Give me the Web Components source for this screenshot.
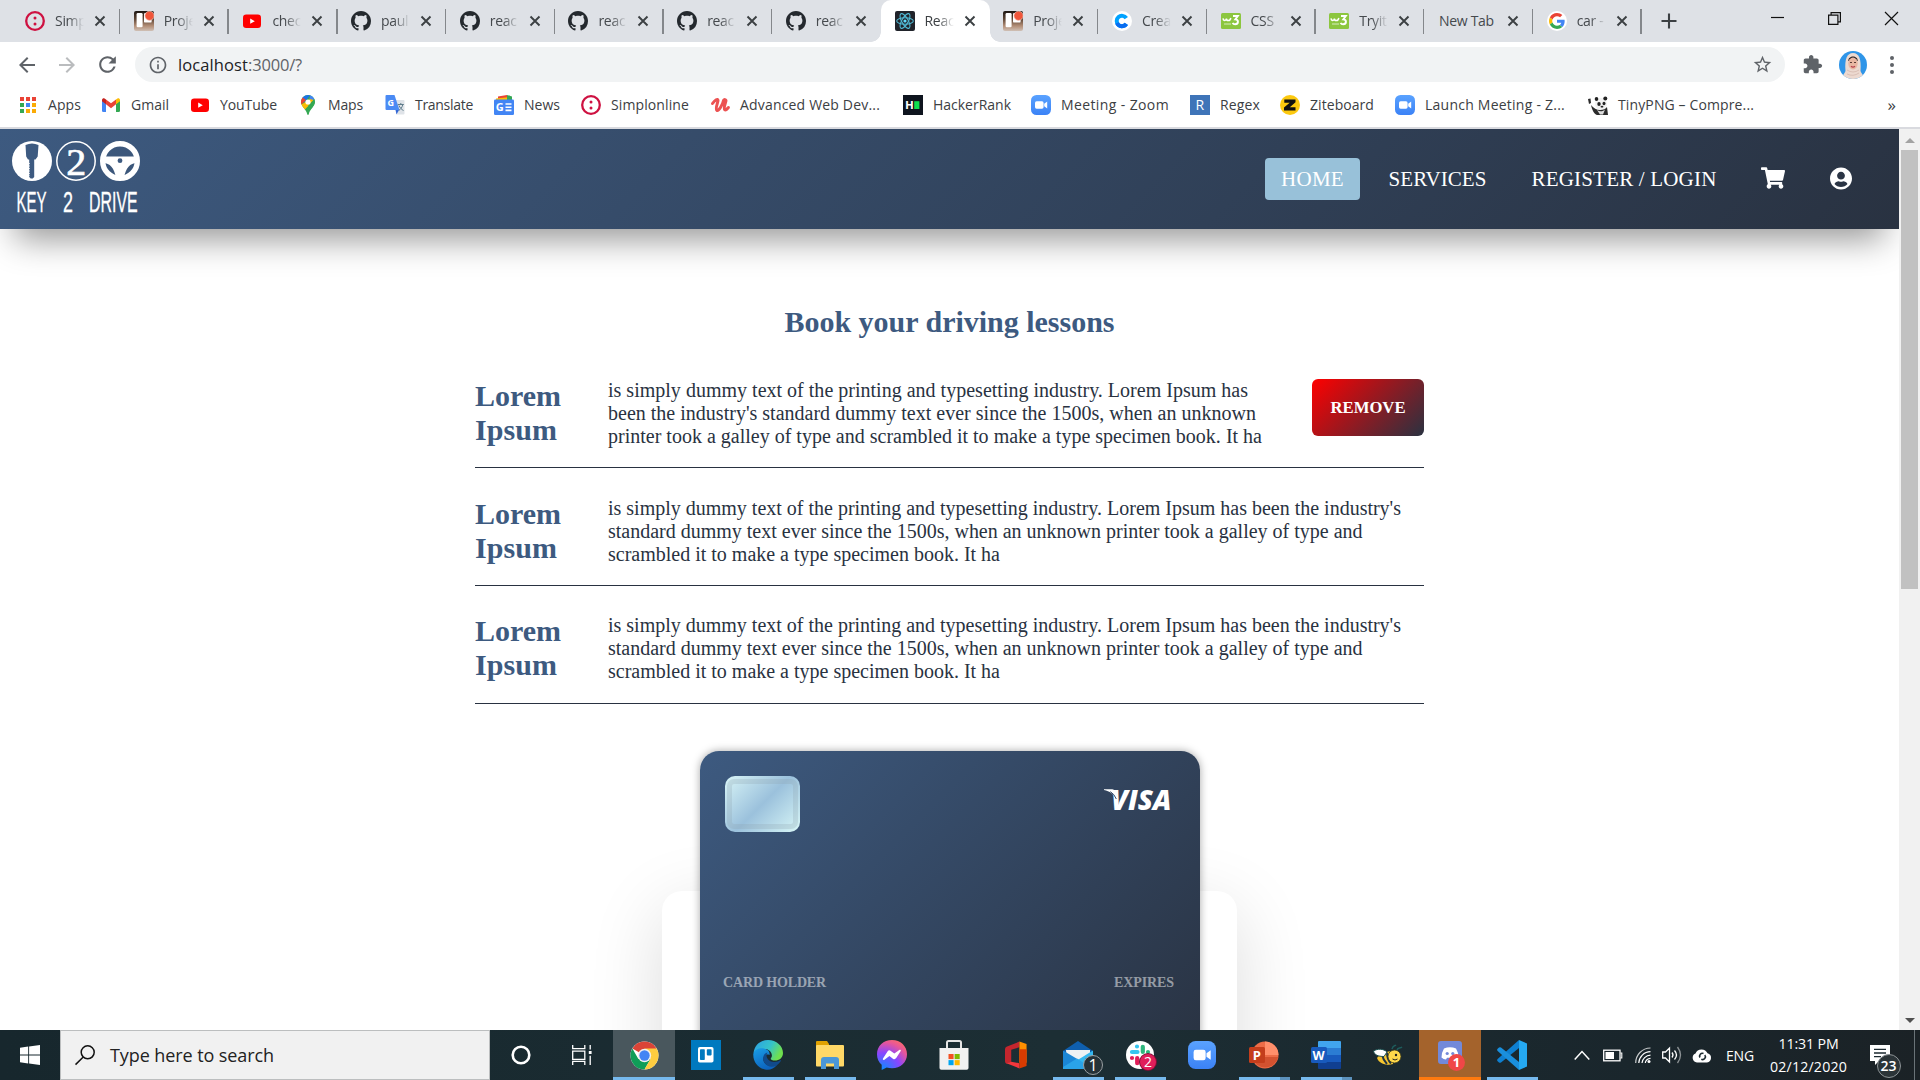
<!DOCTYPE html>
<html lang="en">
<head>
<meta charset="utf-8">
<title>React App</title>
<style>
html,body{margin:0;height:100%;overflow:hidden;background:#fff}
body{font-family:"Open Sans","Noto Sans",sans-serif}
</style>
</head>
<body>
<desktop-screen>
  <browser-tabs></browser-tabs>
  <address-bar></address-bar>
  <bookmark-bar></bookmark-bar>
  <page-view>
    <site-header></site-header>
    <lesson-list>
      <lesson-row>
        <fit-text w="640" slot="text">is simply dummy text of the printing and typesetting industry. Lorem Ipsum has</fit-text>
        <fit-text w="648" slot="text">been the industry's standard dummy text ever since the 1500s, when an unknown</fit-text>
        <fit-text w="654" slot="text">printer took a galley of type and scrambled it to make a type specimen book. It ha</fit-text>
        <remove-button slot="action">REMOVE</remove-button>
      </lesson-row>
      <lesson-row>
        <fit-text w="793" slot="text">is simply dummy text of the printing and typesetting industry. Lorem Ipsum has been the industry's</fit-text>
        <fit-text w="754.5" slot="text">standard dummy text ever since the 1500s, when an unknown printer took a galley of type and</fit-text>
        <fit-text w="392" slot="text">scrambled it to make a type specimen book. It ha</fit-text>
      </lesson-row>
      <lesson-row last>
        <fit-text w="793" slot="text">is simply dummy text of the printing and typesetting industry. Lorem Ipsum has been the industry's</fit-text>
        <fit-text w="754.5" slot="text">standard dummy text ever since the 1500s, when an unknown printer took a galley of type and</fit-text>
        <fit-text w="392" slot="text">scrambled it to make a type specimen book. It ha</fit-text>
      </lesson-row>
    </lesson-list>
    <payment-card></payment-card>
  </page-view>
  <task-bar></task-bar>
</desktop-screen>

<script>
const GH='<path fill="#24292e" d="M8 0C3.58 0 0 3.58 0 8c0 3.54 2.29 6.53 5.47 7.59.4.07.55-.17.55-.38 0-.19-.01-.82-.01-1.49-2.01.37-2.53-.49-2.69-.94-.09-.23-.48-.94-.82-1.13-.28-.15-.68-.52-.01-.53.63-.01 1.08.58 1.23.82.72 1.21 1.87.87 2.33.66.07-.52.28-.87.51-1.07-1.78-.2-3.64-.89-3.64-3.95 0-.87.31-1.59.82-2.15-.08-.2-.36-1.02.08-2.12 0 0 .67-.21 2.2.82.64-.18 1.32-.27 2-.27s1.36.09 2 .27c1.53-1.04 2.2-.82 2.2-.82.44 1.1.16 1.92.08 2.12.51.56.82 1.27.82 2.15 0 3.07-1.87 3.75-3.65 3.95.29.25.54.73.54 1.48 0 1.07-.01 1.93-.01 2.2 0 .21.15.46.55.38A8.01 8.01 0 0016 8c0-4.42-3.58-8-8-8z"/>';
const ZOOM='<defs><linearGradient id="z" x2="0" y2="1"><stop stop-color="#5aa2ff"/><stop offset="1" stop-color="#3b82f6"/></linearGradient></defs><rect width="20" height="20" rx="5.5" fill="url(#z)"/><rect x="4" y="6.3" width="8.6" height="7.4" rx="1.6" fill="#fff"/><path d="M13.2 8.8L16.2 6.6v6.8l-3-2.2z" fill="#fff"/>';
/* each entry: [viewBox, markup] */
const ICONS={
 simplon:['0 0 20 20','<circle cx="10" cy="10" r="8.8" fill="none" stroke="#ce1141" stroke-width="2.3"/><circle cx="10" cy="7" r="1.5" fill="#ce1141"/><circle cx="10" cy="13" r="1.5" fill="#ce1141"/>'],
 project:['0 0 20 20','<defs><linearGradient id="g" x2="0" y2="1"><stop stop-color="#1c1613"/><stop offset=".4" stop-color="#5e4636"/><stop offset=".75" stop-color="#b48f78"/><stop offset="1" stop-color="#cfc0b6"/></linearGradient></defs><rect width="20" height="20" rx="2" fill="url(#g)"/><rect x="2.6" y="2" width="6" height="14.2" rx="1.2" fill="#fff"/><rect x="10" y="2" width="7.6" height="9.6" rx="1.2" fill="#fff"/><circle cx="15.5" cy="4.8" r="4.6" fill="#f0553a" stroke="#f2d9d0" stroke-width=".6"/>'],
 youtube:['0 0 20 20','<rect x="1" y="3.5" width="18" height="13.4" rx="3.2" fill="#f00"/><path d="M8.2 7.6v5.2l4.6-2.6z" fill="#fff"/>'],
 github:['0 0 16 16',GH],
 react:['0 0 20 20','<rect width="20" height="20" rx="2" fill="#20232a"/><g fill="none" stroke="#4fb8d3" stroke-width="1.1"><ellipse cx="10" cy="10" rx="8.3" ry="3.2"/><ellipse cx="10" cy="10" rx="8.3" ry="3.2" transform="rotate(60 10 10)"/><ellipse cx="10" cy="10" rx="8.3" ry="3.2" transform="rotate(120 10 10)"/></g><circle cx="10" cy="10" r="1.6" fill="#61dafb"/>'],
 crea:['0 0 20 20','<circle cx="10" cy="10" r="10" fill="#fff"/><path d="M14.3 7.2A5.2 5.2 0 1 0 14.3 12.8" fill="none" stroke="#00a2ff" stroke-width="4"/><path d="M5 12a5.3 5.3 0 0 0 9.3.8" fill="none" stroke="#0a6df0" stroke-width="4"/>'],
 w3:['0 0 20 20','<rect y="2" width="20" height="16" rx="1.5" fill="#8cc63f"/><path d="M2 7.4c.2 2.6 3 2.8 3.4.2.2 2.7 3.8 2.8 4.4-.6" fill="none" stroke="#fff" stroke-width="1.5"/><path d="M12 5h4.8l-2.5 3.400c3.700.2 3.400 4.800-.2 4.800-1.300 0-2.100-.6-2.500-1.400" fill="none" stroke="#fff" stroke-width="1.9"/><path d="M3 13h7" stroke="#d8edc0" stroke-width="1"/>'],
 google:['-6 -6 60 60','<circle cx="24" cy="24" r="30" fill="#fff"/><path fill="#EA4335" d="M24 9.500c3.540 0 6.710 1.220 9.210 3.600l6.850-6.850C35.900 2.380 30.470 0 24 0 14.620 0 6.510 5.380 2.560 13.220l7.980 6.190C12.430 13.720 17.740 9.500 24 9.500z"/><path fill="#4285F4" d="M46.980 24.550c0-1.570-.150-3.090-.380-4.550H24v9.020h12.940c-.580 2.960-2.260 5.480-4.780 7.180l7.730 6c4.510-4.180 7.090-10.360 7.090-17.650z"/><path fill="#FBBC05" d="M10.530 28.590c-.480-1.450-.760-2.990-.760-4.590s.270-3.140.760-4.590l-7.980-6.190C.920 16.460 0 20.120 0 24c0 3.880.920 7.540 2.560 10.780l7.970-6.190z"/><path fill="#34A853" d="M24 48c6.480 0 11.930-2.130 15.890-5.810l-7.730-6c-2.150 1.450-4.920 2.300-8.160 2.300-6.260 0-11.570-4.220-13.470-9.910l-7.980 6.190C6.510 42.620 14.620 48 24 48z"/>'],
 close:['0 0 12 12','<path d="M1.500 1.500l9 9M10.500 1.500l-9 9" stroke="#3c4043" stroke-width="1.9"/>'],
 plus:['0 0 16 16','<path d="M8 .5v15M.5 8h15" stroke="#3c4043" stroke-width="2.1"/>'],
 back:['0 0 24 24','<path fill="#5f6368" d="M20 11H7.830l5.590-5.590L12 4l-8 8 8 8 1.410-1.410L7.830 13H20v-2z"/>'],
 fwd:['0 0 24 24','<path fill="#babcbe" d="M12 4l-1.410 1.410L16.170 11H4v2h12.170l-5.580 5.590L12 20l8-8z"/>'],
 reload:['0 0 24 24','<path fill="#5f6368" d="M17.650 6.350A7.958 7.958 0 0012 4c-4.420 0-7.990 3.580-7.990 8s3.570 8 7.990 8c3.730 0 6.840-2.550 7.730-6h-2.080A5.990 5.990 0 0112 18c-3.310 0-6-2.690-6-6s2.690-6 6-6c1.660 0 3.140.69 4.220 1.780L13 11h7V4l-2.350 2.350z"/>'],
 info:['0 0 24 24','<path fill="#5f6368" d="M11 7h2v2h-2zm0 4h2v6h-2zm1-9C6.480 2 2 6.480 2 12s4.480 10 10 10 10-4.480 10-10S17.520 2 12 2zm0 18c-4.410 0-8-3.590-8-8s3.590-8 8-8 8 3.590 8 8-3.590 8-8 8z"/>'],
 star:['0 0 24 24','<path fill="#5f6368" d="M22 9.240l-7.190-.620L12 2 9.190 8.630 2 9.240l5.460 4.730L5.820 21 12 17.270 18.180 21l-1.630-7.030L22 9.240zM12 15.400l-3.760 2.270 1-4.280-3.320-2.880 4.380-.380L12 6.100l1.710 4.040 4.380.380-3.320 2.880 1 4.280L12 15.400z"/>'],
 puzzle:['0 0 24 24','<path fill="#5f6368" d="M20.500 11H19V7c0-1.100-.9-2-2-2h-4V3.500C13 2.120 11.880 1 10.500 1S8 2.120 8 3.500V5H4c-1.100 0-1.990.9-1.990 2v3.800H3.500c1.490 0 2.700 1.210 2.700 2.700s-1.210 2.700-2.700 2.700H2V20c0 1.100.9 2 2 2h3.800v-1.500c0-1.490 1.210-2.700 2.700-2.700 1.490 0 2.700 1.210 2.700 2.700V22H17c1.100 0 2-.9 2-2v-4h1.500c1.380 0 2.500-1.120 2.500-2.500S21.880 11 20.500 11z"/>'],
 avatar:['0 0 28 28','<defs><clipPath id="a"><circle cx="14" cy="14" r="14"/></clipPath></defs><g clip-path="url(#a)"><rect width="28" height="28" fill="#2f95e8"/><path d="M3 28c0-4 2.500-5 3.500-8C5.500 8 8 2 14 2s8.500 6 7.500 18c1 3 3.500 4 3.500 8z" fill="#ecd9d0"/><path d="M9.300 10C9 4 19 4 18.700 10z" fill="#2a2326"/><ellipse cx="14" cy="12.5" rx="4.7" ry="6" fill="#e9b7a2"/><path d="M11 11.500h2M15 11.500h2" stroke="#5a3c36" stroke-width="1"/><path d="M12 15.300q2 1.800 4 0" stroke="#b9434f" stroke-width="1.2" fill="none"/><path d="M8 19q6 4 12 0M8 23q6 3 12-1" stroke="#d9bfb5" fill="none"/></g>'],
 kebab:['0 0 4 20','<g fill="#5f6368"><circle cx="2" cy="3" r="2"/><circle cx="2" cy="10" r="2"/><circle cx="2" cy="17" r="2"/></g>'],
 min:['0 0 13 13','<path d="M0 5.500h13" stroke="#111" stroke-width="1.2"/>'],
 max:['0 0 13 13','<path d="M.6 3.100h9.300v9.300H.6zM3.100 3V.6h9.300v9.300H10" fill="none" stroke="#111" stroke-width="1.2"/>'],
 xwin:['0 0 13 13','<path d="M0 0l13 13M13 0L0 13" stroke="#111" stroke-width="1.2"/>'],
 apps:['0 0 20 20','<g fill="#ea4335"><path d="M2 2h4v4H2zM8 2h4v4H8zM14 2h4v4h-4z"/></g><path fill="#34a853" d="M2 8h4v4H2zM2 14h4v4H2z"/><path fill="#4285f4" d="M8 8h4v4H8z"/><path fill="#fbab05" d="M14 8h4v4h-4zM8 14h4v4H8zM14 14h4v4h-4z"/>'],
 gmail:['0 0 20 20','<path fill="#4285f4" d="M1 5.500l4 3V17H2.300A1.300 1.300 0 011 15.700z"/><path fill="#34a853" d="M19 5.500l-4 3V17h2.700a1.300 1.300 0 001.300-1.300z"/><path fill="#ea4335" d="M5 4.500l5 3.800 5-3.800v4.800l-5 3.900-5-3.900z"/><path fill="#c5221f" d="M1 5.200C1 3.200 3.300 2.900 4.300 3.900L5 4.500v4.800L1 6.300z"/><path fill="#fbbc04" d="M19 5.200c0-2-2.300-2.300-3.300-1.300l-.7.6v4.800l4-3z"/>'],
 maps:['0 0 20 20','<path d="M10 0a7 7 0 00-7 7c0 4.500 4.800 6.500 6.200 12 .2 1.300 1.400 1.300 1.600 0C12.200 13.500 17 11.500 17 7a7 7 0 00-7-7z" fill="#34a853"/><path d="M4.600 2.500A7 7 0 0112.200.35L6 8z" fill="#1a73e8"/><path d="M4.700 2.400A7 7 0 003.500 9.600L8 5z" fill="#ea4335"/><path d="M12.200.35A7 7 0 0116.300 4L10 11z" fill="#4285f4"/><path d="M3.500 9.600c.9 2 2.300 3.400 3.400 4.900L16 5 12 4z" fill="#fbbc04"/><path d="M16.300 4C18 8.500 15 11 12.600 14.300L10 11z" fill="#34a853"/><circle cx="10" cy="7" r="2.6" fill="#fff"/>'],
 translate:['0 0 20 20','<path d="M8 5h10.500q1 0 1 1v12.500q0 1-1 1H12z" fill="#dfe3e8"/><path d="M10.500 15l3.500 0-2.500 4.500z" fill="#3367d6"/><path d="M1.500 0h8l5 15h-13Q.5 15 .5 14V1q0-1 1-1z" fill="#4a8af4"/><text x="2.6" y="10.6" font-size="9" font-weight="700" fill="#fff" font-family="Open Sans">G</text><path d="M12.800 9.500h6M15.800 8v1.500M17.800 9.500c-.5 3-2.500 5-4 6M14 10.500c.8 2 2.500 4 4.500 5" stroke="#607d8b" fill="none"/>'],
 news:['0 0 20 20','<path d="M2 5L15.500.5 17 6z" fill="#34a853"/><path d="M4 1.500L13 0v6H4z" fill="#ea4335"/><path d="M2 3.500L16 2v5H2z" fill="#fbbc04"/><path d="M13 0l5 1.500V5h-5z" fill="#34a853"/><rect y="4.5" width="20" height="15.5" rx="1.2" fill="#4285f4"/><text x="1.8" y="16.2" font-size="11" font-weight="700" fill="#fff" font-family="Open Sans">G</text><path d="M11.500 9h6M11.500 12.200h6M11.500 15.400h6" stroke="#fff" stroke-width="1.6"/>'],
 udemy:['0 0 20 20','<path d="M2.500 8.500C5 5 8 3 8 5.500c0 2-3 8-1.200 9.700 2 1.500 6-6 6.700-9.700.3-1.500 2.800-1 2.400.7-.5 2.200-2.500 7-1.200 8.500 1 .9 2.500-.7 3.700-2.200" stroke="#ec5252" stroke-width="3" fill="none" stroke-linecap="round"/>'],
 hacker:['0 0 20 20','<rect width="20" height="20" fill="#0e141e"/><text x="2.4" y="14" font-size="10.5" font-weight="800" fill="#fff" font-family="Inter">H</text><rect x="11.2" y="6.2" width="5.2" height="7.8" fill="#0fe04f"/>'],
 zoom:['0 0 20 20',ZOOM],
 regex:['0 0 20 20','<rect width="20" height="20" fill="#3e74b8"/><text x="5.4" y="15" font-size="14" fill="#fff" font-family="Open Sans">R</text>'],
 zite:['0 0 20 20','<circle cx="10" cy="10" r="10" fill="#fcc90f"/><path d="M4.300 4.500h11.200v2.800L9.800 12.200h5.700V15.500H4V12.600l5.700-4.800H4.300z" fill="#111"/>'],
 panda:['0 0 20 20','<ellipse cx="13" cy="9" rx="6" ry="6" fill="#f2f2f2"/><ellipse cx="8.5" cy="4" rx="1.8" ry="2" fill="#222"/><circle cx="17.3" cy="3.5" r="2" fill="#222"/><ellipse cx="11" cy="9" rx="1.7" ry="2" fill="#222"/><ellipse cx="16" cy="8.5" rx="1.5" ry="1.8" fill="#222"/><ellipse cx="14" cy="11.7" rx="1.4" ry=".9" fill="#222"/><path d="M0 4l2.500-.5L3 8 1 9zM3 10q4 5 9 5 5 0 7-3l1 8H9C6 19 4 15 3 10z" fill="#2b2b2b"/><path d="M9 15c3 2 6 1.500 8-.5l-2 5h-3z" fill="#ddd"/>'],
 cart:['0 0 576 512','<path fill="#fff" d="M528.120 301.319l47.273-208C578.806 78.301 567.391 64 551.990 64H159.208l-9.166-44.810C147.758 8.021 137.930 0 126.529 0H24C10.745 0 0 10.745 0 24v16c0 13.255 10.745 24 24 24h69.883l70.248 343.435C147.325 417.100 136 435.222 136 456c0 30.928 25.072 56 56 56s56-25.072 56-56c0-15.674-6.447-29.835-16.824-40h209.647C430.447 426.165 424 440.326 424 456c0 30.928 25.072 56 56 56s56-25.072 56-56c0-22.172-12.888-41.332-31.579-50.405l5.517-24.276c3.413-15.018-8.002-29.319-23.403-29.319H218.117l-6.545-32h293.145c11.206 0 20.920-7.754 23.403-18.681z"/>'],
 user:['0 0 496 512','<path fill="#fff" d="M248 8C111 8 0 119 0 256s111 248 248 248 248-111 248-248S385 8 248 8zm0 96c48.600 0 88 39.400 88 88s-39.400 88-88 88-88-39.400-88-88 39.400-88 88-88zm0 344c-58.700 0-111.300-26.600-146.500-68.200 18.800-35.400 55.600-59.800 98.500-59.800 2.400 0 4.800.4 7.100 1.100 13 4.200 26.600 6.900 40.900 6.900 14.300 0 28-2.700 40.900-6.900 2.300-.7 4.700-1.100 7.100-1.100 42.900 0 79.700 24.400 98.500 59.800C359.300 421.400 306.700 448 248 448z"/>'],
 logo:['0 0 130 80','<circle cx="20" cy="20" r="20" fill="#fff"/><path d="M13.500 4q6.500-3 13 0l-.8 11.500-2.200 3h-1.300v17.500l-1.500 1.500h-2L17.200 36V18.500H16l-1.800-3z" fill="#3d5a80"/><path d="M17.200 22v13" stroke="#fff" stroke-width="1" stroke-dasharray="1 1.5"/><circle cx="64" cy="20" r="19.2" fill="none" stroke="#fff" stroke-width="1.5"/><text transform="translate(54.2 33.8) scale(1.05 1)" font-family="Liberation Serif,serif" font-size="38" fill="#fff" stroke="#fff" stroke-width=".7">2</text><circle cx="108" cy="20" r="17.3" fill="none" stroke="#fff" stroke-width="5.4"/><path d="M92 15.500h32c1.500 3 1.500 5 .5 6.500-6 0-11 5-12.500 15h-8C102.500 27 97.500 22 91.500 22c-1-1.500-1-3.500.5-6.500z" fill="#fff"/><circle cx="108" cy="19.7" r="2.4" fill="#3d5a80"/><g font-family="Liberation Sans,sans-serif" font-size="29" fill="#fff" stroke="#fff" stroke-width=".3"><text transform="translate(4.5 71) scale(.52 1)">KEY</text><text transform="translate(51 71) scale(.62 1)">2</text><text transform="translate(77 71) scale(.55 1)">DRIVE</text></g>'],
 visa:['0 0 68 22','<text x="7" y="21" font-family="Open Sans" font-weight="800" font-style="italic" font-size="28" textLength="61.5" lengthAdjust="spacingAndGlyphs" fill="#fff">VISA</text><path d="M0 0H8.500q2.500.2 3 3l1.200 7.500C10.500 5 5.500 2 0 .8z" fill="#fff"/><path d="M6.500 2.500q4 2.500 6 7.500" stroke="#34496a" stroke-width="1" fill="none"/>'],
 start:['0 0 20 20','<path fill="#fff" d="M0 2.800l8.200-1.200v8H0zM9.100 1.500L20 0v9.600H9.100zM0 10.500h8.200v8L0 17.300zM9.100 10.500H20V20L9.100 18.600z"/>'],
 search:['0 0 20 20','<circle cx="12.7" cy="7.3" r="6.5" fill="none" stroke="#111" stroke-width="1.5"/><path d="M8 12.200L.5 19.600" stroke="#111" stroke-width="1.5"/>'],
 cortana:['0 0 20 20','<circle cx="10" cy="10" r="8.3" fill="none" stroke="#fff" stroke-width="2.6"/>'],
 tview:['0 0 20 20','<g fill="none" stroke="#fff" stroke-width="1.3"><path d="M.7 0v3.600h12.100V0M.7 6.100h12.100v8.300H.7zM.7 20v-3.600h12.100V20M18.200 0v4.500M18.200 10.800V20"/></g><path d="M16.800 6h2.800v3h-2.800z" fill="#fff"/>'],
 chrome:['0 0 28 28','<circle cx="14" cy="14" r="13.5" fill="#fff"/><path d="M14 14L2.300 7.250A13.500 13.500 0 0125.700 7.250z" fill="#db4437"/><path d="M2.300 7.250A13.500 13.500 0 0014 27.500l5.850-10.100L14 14 8.100 17.400z" fill="#0f9d58"/><path d="M25.700 7.250H14l5.850 10.150L14 27.500A13.500 13.500 0 0025.700 7.250z" fill="#ffcd40"/><circle cx="14" cy="14" r="6.4" fill="#f1f1f1"/><circle cx="14" cy="14" r="5" fill="#4285f4"/>'],
 trello:['0 0 30 30','<rect width="30" height="30" fill="#0079bf"/><rect x="7" y="7" width="15.5" height="15.5" rx="1.8" fill="#fff"/><rect x="9" y="9.2" width="4.8" height="10.8" rx=".8" fill="#0079bf"/><rect x="15.8" y="9.2" width="4.8" height="6.2" rx=".8" fill="#0079bf"/>'],
 edge:['0 0 30 30','<defs><linearGradient id="e1" x2="1" y2=".4"><stop stop-color="#2b9fe6"/><stop offset=".6" stop-color="#35c3c9"/><stop offset="1" stop-color="#6fe04f"/></linearGradient><linearGradient id="e2" x2=".5" y2="1"><stop stop-color="#1a9fe8"/><stop offset="1" stop-color="#0c62bd"/></linearGradient></defs><path d="M.5 13C1.500 5 7.500 0 15 0c8.500 0 15 6 15 13 0 5-4 7.500-8 7.500-3 0-5-1-4-2.500 2-2 1-8-5.500-9C7 8.500 2 11 .5 13z" fill="url(#e1)"/><path d="M.3 14C1 9.500 7 7.500 11 8.500c5 1 6 4.500 5.500 6.500C12 13 9 18 11 22c2 4 8 5 13 3-3 4-8 5.500-12 4.500C5 28 0 22 .3 14z" fill="url(#e2)"/><path d="M11 22c-2-3.500-.5-9 3.500-9.500C11.500 17 16 22 21 22c3 0 5-1 6.500-2 .5.2.5.8 0 1.600C23 29 14 28 11 22z" fill="#114a8b"/>'],
 explorer:['0 0 28 28','<path d="M0 1q0-1 1-1h10l2 3v6H0z" fill="#e0a100"/><rect y="4" width="28" height="21.5" rx="1" fill="#ffd867"/><path d="M5 28v-9q0-3 3-3h12q3 0 3 3v9h-5v-5.500h-8V28z" fill="#4a97d8"/>'],
 messenger:['0 0 30 30','<defs><radialGradient id="m" cx=".2" cy="1" r="1.15"><stop stop-color="#0a8dff"/><stop offset=".5" stop-color="#8a45ff"/><stop offset=".8" stop-color="#e6569b"/><stop offset="1" stop-color="#ff6d63"/></radialGradient></defs><path d="M15 0C6.500 0 0 6 0 14.200c0 4.400 1.800 8 4.700 10.600V30l5-2.500c1.600.5 3.500.8 5.300.8 8.500 0 15-6 15-14.100S23.500 0 15 0z" fill="url(#m)"/><path d="M6 18.500l4.500-7q1.500-2 3.300-.6l3.500 2.600 5-3.600c1-.6 2 .2 1.400 1.200l-4.500 7q-1.400 1.900-3.300.6l-3.500-2.700-5 3.700c-1 .7-2-.2-1.400-1.200z" fill="#fff"/>'],
 store:['0 0 30 30','<path d="M8 8V2.500Q8 1 9.500 1h11Q22 1 22 2.500V8" fill="none" stroke="#e6e6e6" stroke-width="2"/><path d="M.5 8h29v20q0 1.800-1.800 1.800H2.300Q.5 29.800.5 28z" fill="#f1f1f1"/><path d="M9.500 14h5.100v5.100H9.500z" fill="#f25022"/><path d="M15.600 14h5.100v5.100h-5.100z" fill="#7fba00"/><path d="M9.500 20.100h5.100v5.100H9.500z" fill="#00a4ef"/><path d="M15.600 20.100h5.100v5.100h-5.100z" fill="#ffb900"/>'],
 office:['0 0 24 28','<path d="M15 0L1.500 5.500Q0 6.200 0 8v12.500q0 2 1.500 2.600L6.500 21V8.500L15 6z" fill="#c4262e"/><path d="M15 0l7.500 2.500V22H15z" fill="#ff8f00"/><path d="M15 8h7.500v17.500L15 28z" fill="#d83b01"/><path d="M1.500 22.500L15 28v-5.500l-8.500-1.500z" fill="#f4373c"/>'],
 mail:['0 0 30 28','<path d="M0 10L15 0l15 10v4H0z" fill="#0f5fae"/><path d="M3 9h24v11H4z" fill="#eef1f4"/><path d="M0 9.500L16 19 0 28z" fill="#1b86d6"/><path d="M30 9.500L13 20l17 8z" fill="#35b8f1"/><path d="M0 28V26L14 17.500l16 10.500z" fill="#2aa3e8"/>'],
 slack:['0 0 28 28','<circle cx="14" cy="14" r="14" fill="#fff"/><g stroke-width="4.2" stroke-linecap="round"><path d="M11 5.500v0M6 11h5.500" stroke="#36c5f0"/><path d="M16.800 5.800v5.200M22 11v0" stroke="#2eb67d"/><path d="M17 17.200h5.200M17 22v0" stroke="#ecb22e"/><path d="M11.200 17v5.200M6 17v0" stroke="#e01e5a"/></g>'],
 ppt:['0 0 30 30','<circle cx="16" cy="15" r="13.5" fill="#ed6c47"/><path d="M16 1.500A13.500 13.500 0 0129.500 15H16z" fill="#ff8f6b"/><path d="M3 17h26.300A13.500 13.500 0 013 17z" fill="#d35230"/><rect y="7" width="16" height="16" rx="1.5" fill="#c43e1c"/><text x="3.7" y="19.5" font-size="13" font-weight="700" fill="#fff" font-family="Open Sans">P</text>'],
 word:['0 0 30 28','<path d="M7 1q0-1 1-1h21q1 0 1 1v6H7z" fill="#41a5ee"/><path d="M7 7h23v7H7z" fill="#2b7cd3"/><path d="M7 14h23v7H7z" fill="#185abd"/><path d="M7 21h23v6q0 1-1 1H8q-1 0-1-1z" fill="#103f91"/><rect y="6" width="16" height="16" rx="1.5" fill="#185abd"/><text x="1.5" y="18.5" font-size="12.5" font-weight="700" fill="#fff" font-family="Open Sans">W</text>'],
 bee:['0 0 30 22','<path d="M19 5c1-4 3-3 4-4M24 6c1-3 3-1 5-3" stroke="#1e5c5c" stroke-width="1.5" fill="none"/><path d="M4 14c2 6 10 8 16 6l1-13c-8 0-14 3-17 7z" fill="#f7c62f"/><path d="M9 11c1 4 2 6 5 9M14 8.500c0 4 1 8 4 11" stroke="#234" stroke-width="2" fill="none"/><path d="M.5 7c4-2.500 10-2.500 13.500 1l-3 4.500C5 12.500 1.500 11 .5 7z" fill="#fff" stroke="#1b4f4f"/><circle cx="21.5" cy="12.5" r="6.5" fill="#ffd84a" stroke="#3b3b1c" stroke-width=".8"/><circle cx="23" cy="11" r="1.2" fill="#222"/><path d="M19.500 15q2.500 2 5 0" stroke="#222" fill="none"/>'],
 discord:['0 0 24 28','<path d="M3 0h18q3 0 3 3v24l-4-4H3q-3 0-3-3V3q0-3 3-3z" fill="#7289da"/><path d="M6 7.500q6-2.500 12 0 2.500 4 2.500 9-2 2-4.500 2l-1-1.800H9l-1 1.800q-2.500 0-4.500-2 0-5 2.500-9z" fill="#fff"/><circle cx="9.2" cy="12.5" r="1.6" fill="#7289da"/><circle cx="14.8" cy="12.5" r="1.6" fill="#7289da"/>'],
 vscode:['0 0 30 30','<path d="M22 0l8 3.500v23L22 30z" fill="#25a9f2"/><path d="M22 0v8L4 22.500q-1 .7-2 0L.4 21Q-.4 20 .6 19z" fill="#0e7fd0"/><path d="M22 30v-8L4 7.500q-1-.7-2 0L.4 9Q-.4 10 .6 11z" fill="#1a8fdd"/>'],
 chev:['0 0 16 12','<path d="M.7 10.500L8 2.500l7.300 8" fill="none" stroke="#fff" stroke-width="1.5"/>'],
 battery:['0 0 20 13','<rect x=".7" y="1.2" width="16.3" height="10.6" fill="none" stroke="#fff" stroke-width="1.3"/><path d="M17.500 4h1.300v5h-1.300" stroke="#fff" fill="none" stroke-width="1.1"/><path d="M2.500 3h8.500v7H2.500z" fill="#fff"/>'],
 wifi:['0 0 16 16','<g fill="none" stroke="#fff" stroke-width="1.2"><path d="M.7 16C.7 8 7 1 15.500 1" opacity=".75"/><path d="M3.800 16C4 10 9 4.600 15.500 4.600M7 16c.2-4 4-7.800 8.500-7.800M10.300 16c.2-2.400 2.400-4.600 5.200-4.600"/></g><circle cx="14" cy="14.5" r="1.5" fill="#fff"/>'],
 volume:['0 0 20 18','<g fill="none" stroke="#fff" stroke-width="1.3"><path d="M.7 6v6H3.500l4 4V2l-4 4zM10 6.500q2 2.500 0 5M12.500 4.500q4 4.500 0 9"/><path d="M15.500 1q6 8 0 16" opacity=".5"/></g>'],
 cloud:['0 0 20 15','<path d="M5 14.500A4.700 4.700 0 013.500 5.500 6.500 6.500 0 0115.500 5.300 4.700 4.700 0 0115 14.500z" fill="#fff"/><path d="M8 9.500a2.800 2.800 0 013.500-4M12.800 7a2.800 2.800 0 01-3.500 4.200" stroke="#1c2a30" stroke-width="1.6" fill="none"/>'],
 note:['0 0 20 20','<path d="M0 0h20v16H9l-4 4v-4H0z" fill="#fff"/><path d="M4 4.300h12M4 8h12M4 11.700h7" stroke="#1c2a30" stroke-width="1.3"/>']
};
function define(name,css,html){
  customElements.define(name,class extends HTMLElement{
    constructor(){super();this.attachShadow({mode:'open'}).innerHTML=`<style>:host,*{box-sizing:border-box}${css}</style>${typeof html==='function'?html(this):html}`;}
  });
}
/* Inline SVG glyph: <ui-icon name w h> */
customElements.define('ui-icon',class extends HTMLElement{
  connectedCallback(){
    if(this.shadowRoot)return;
    const [vb,m]=ICONS[this.getAttribute('name')],w=this.getAttribute('w')||20,h=this.getAttribute('h')||w;
    this.attachShadow({mode:'open'}).innerHTML=`<style>:host{display:block;flex:none;width:${w}px;height:${h}px}svg{display:block;overflow:visible}</style><svg width="${w}" height="${h}" viewBox="${vb}">${m}</svg>`;
  }
});
/* Single line of text whose tracking is adjusted so that it spans w pixels */
customElements.define('fit-text',class extends HTMLElement{
  connectedCallback(){
    if(this.shadowRoot)return;
    this.attachShadow({mode:'open'}).innerHTML='<style>:host{display:block;white-space:nowrap;flex:none}span{display:inline-block}</style><span><slot></slot></span>';
    queueMicrotask(()=>{
      const s=this.shadowRoot.querySelector('span'),w=+this.getAttribute('w');
      const n=(this.textContent.trim()||'REMOVE').length;
      s.style.letterSpacing=((w-s.getBoundingClientRect().width)/n)+'px';
    });
  }
});
const icon=(n,w,h)=>`<ui-icon name="${n}" w="${w||20}" h="${h||w||20}"></ui-icon>`;
const fit=(t,w,c='')=>`<fit-text w="${w}" class="${c}">${t}</fit-text>`;

define('desktop-screen',':host{display:flex;flex-direction:column;width:1920px;height:1080px;overflow:hidden}','<slot></slot>');

define('browser-tab',`
:host{display:flex;align-items:center;width:108.7px;height:42px;padding-left:14px;font-size:14px;color:#45494d;position:relative}
.t{width:29px;margin-left:10px;height:20px;line-height:19px;overflow:hidden;white-space:nowrap;-webkit-mask-image:linear-gradient(90deg,#000 45%,transparent);letter-spacing:-.3px}
:host([wide]) .t{width:56px;margin-left:1px;-webkit-mask-image:none}
ui-icon.x{margin-left:10px}
:host([wide]) ui-icon.x{margin-left:12px}
:host(:not([bare]))::after{content:"";position:absolute;right:-.5px;top:9px;width:1.4px;height:25px;background:#84878b}
:host([active]){color:#3c4043}
:host([active])::before{content:"";position:absolute;z-index:-1;left:0;right:-1px;top:0;bottom:0;border-radius:10px 10px 0 0;background:#fff}
.f{display:none}
:host([active]) .f{display:block;position:absolute;bottom:0;width:10px;height:10px}
.l{left:-10px;background:radial-gradient(circle at 0 0,transparent 9.5px,#fff 10px)}
.r{right:-11px;background:radial-gradient(circle at 100% 0,transparent 9.5px,#fff 10px)}
`,el=>{const i=el.getAttribute('icon');return `<div class="f l"></div><div class="f r"></div>${i?icon(i,20):''}<div class="t"><slot></slot></div><ui-icon class="x" name="close" w="12" h="12"></ui-icon>`;});

const TABS=[['simplon','Simp'],['project','Proje'],['youtube','chec'],['github','paul'],['github','reac'],['github','reac'],['github','reac'],['github','reac','bare'],['react','Reac','active bare'],['project','Proje'],['crea','Crea'],['w3','CSS'],['w3','Tryit'],['','New Tab','wide'],['google','car -']];
define('browser-tabs',`
:host{display:flex;flex:none;height:42px;background:#dee1e6;padding-left:11px;position:relative;z-index:0;align-items:flex-start}
browser-tab{flex:none}
.p{padding:13px 0 0 20px}
.w{display:flex;gap:44px;margin-left:auto;padding:12px 22px 0 0}
`,TABS.map(([i,t,a])=>`<browser-tab ${i?`icon="${i}"`:''} ${a||''}>${t}</browser-tab>`).join('')+`<div class="p">${icon('plus',16)}</div><div class="w">${icon('min',13)}${icon('max',13)}${icon('xwin',13)}</div>`);

define('address-bar',`
:host{display:flex;flex:none;height:45px;background:#fff;align-items:center;padding:0 26px 0 15px;font-size:16.5px}
.pill{display:flex;align-items:center;width:1650px;height:35px;border-radius:18px;background:#f1f3f4;margin-left:15px;padding:0 12px 0 12.5px}
.u{display:flex;margin-left:10.5px;line-height:22px;color:#5f6368}.u .h{color:#202124}
.s{margin-left:auto}.b{margin-left:16px}
`,`${icon('back',24)}<div class="b">${icon('fwd',24)}</div><div class="b">${icon('reload',25)}</div>
<div class="pill">${icon('info',20)}<div class="u">${fit('localhost',70,'h')}${fit(':3000/?',54)}</div><div class="s">${icon('star',21)}</div></div>
<div style="display:flex;align-items:center;margin-left:17px;gap:16px">${icon('puzzle',21)}${icon('avatar',28)}<div style="margin-left:7px">${icon('kebab',4,20)}</div></div>`);

const MARKS=[['apps','Apps',33,83],['gmail','Gmail',38,89],['youtube','YouTube',57,108],['maps','Maps',35,87],['translate','Translate',58,109],['news','News',36,87],['simplon','Simplonline',78,129],['udemy','Advanced Web Dev...',140,193],['hacker','HackerRank',78,128],['zoom','Meeting - Zoom',108,159],['regex','Regex',40,90],['zite','Ziteboard',64,115],['zoom','Launch Meeting - Z...',140,193],['panda','TinyPNG – Compre...',136,200]];
define('bookmark-bar',`
:host{display:flex;flex:none;height:42px;background:#fff;border-bottom:2px solid #d9dadf;padding-left:18px;align-items:center;font-size:14px;color:#3c4043}
.i{display:flex;align-items:center;gap:10px;flex:none;padding-bottom:4px}
fit-text{line-height:20px}
.m{margin:0 24px 5px auto;font-size:17px;line-height:20px}
`,MARKS.map(([i,t,w,p])=>`<div class="i" style="width:${p}px">${icon(i,20)}${fit(t,w)}</div>`).join('')+'<div class="m">»</div>');

define('page-view',`
:host{display:flex;flex:none;height:901px;width:1920px;background:#fff;font-family:"Liberation Serif",serif;color:#293241}
.page{width:1899px;height:901px;overflow:hidden;display:flex;flex-direction:column;align-items:center;flex:none}
.bar{width:21px;background:#f1f1f1;display:flex;flex-direction:column;align-items:center;padding:9px 0 7px}
.up,.dn{border:5px solid transparent;border-top:0;border-bottom:5px solid #a3a3a3}
.dn{border:5px solid transparent;border-bottom:0;border-top:5px solid #505050;margin-top:auto}
.th{width:17px;height:439px;background:#c1c1c1;margin-top:7px}
`,'<div class="page"><slot></slot></div><div class="bar"><div class="up"></div><div class="th"></div><div class="dn"></div></div>');

define('site-header',`
:host{display:flex;flex:none;align-items:center;width:100%;height:100px;background:linear-gradient(135deg,#3d5a80,#293241);box-shadow:0 25px 34px -15px rgba(0,0,0,.42);color:#fff;font-size:21px;position:relative}
.logo{margin:3px 0 0 12px}
nav{display:flex;align-items:center;margin-left:auto;padding-right:47px}
nav fit-text{line-height:24px;margin-top:-1px}
.home{width:95px;height:42px;background:#98c1d9;border-radius:4px;padding:10px 0 0 16px}
.s{margin-left:28.5px}.r{margin-left:45px}
.c{margin:-2px 0 0 44.5px}.u{margin:-2px 0 0 45px}
`,`<div class="logo">${icon('logo',130,80)}</div><nav><div class="home">${fit('HOME',63)}</div>${fit('SERVICES',98,'s')}${fit('REGISTER / LOGIN',185,'r')}<div class="c">${icon('cart',24,22)}</div><div class="u">${icon('user',22,23)}</div></nav>`);

define('lesson-list',`
:host{display:flex;flex:none;flex-direction:column;width:949px;padding-top:76px;margin-bottom:47px}
h1{margin:0 auto 11px;font-size:30px;line-height:34px;color:#3d5a80}
`,`<h1>${fit('Book your driving lessons',330)}</h1><slot></slot>`);

define('lesson-row',`
:host{display:flex;height:118px;padding-top:29px;border-bottom:1px solid #293241;font-size:20px;line-height:23px;align-items:flex-start}
:host([last]){padding-top:28px}
h2{margin:0;width:133px;font-size:30px;line-height:34px;color:#3d5a80}
.a{margin-left:auto}
`,`<h2>${fit('Lorem',86)}${fit('Ipsum',82)}</h2><div><slot name="text"></slot></div><div class="a"><slot name="action"></slot></div>`);

define('remove-button',`
:host{display:flex;align-items:center;justify-content:center;width:112px;height:57px;border-radius:6px;background:linear-gradient(135deg,red,#293241);color:#fff;font-weight:700;font-size:16.67px}
`,'<fit-text w="75"><slot></slot></fit-text>');

define('payment-card',`
:host{display:flex;flex:none;flex-direction:column;align-items:center;width:575px;font-family:"Liberation Serif",serif}
.card{position:relative;flex:none;width:500px;height:315px;margin-left:1px;border-radius:19px;background:linear-gradient(135deg,#3d5a80,#293241);box-shadow:0 0 9px rgba(0,0,0,.35);display:flex;flex-direction:column;justify-content:space-between;padding:25px 26px 75px 25px;color:rgba(255,255,255,.5);font-size:14px;font-weight:700}
.top,.bot{display:flex;justify-content:space-between;align-items:flex-start}
.bot{line-height:17px}
.bot .n{margin-left:-2px}
.chip{width:75px;height:56px;border-radius:10px;background:linear-gradient(135deg,#d9f5f7,#9bc1dc 50%,#d9f7f7);padding:3px 2px}
.ring{width:71px;height:50px;border:5px solid rgba(140,160,170,.25);border-radius:7px}
.v{margin:13px 3px 0 0}
.panel{width:100%;height:300px;flex:none;margin-top:-175px;border-radius:20px;background:#fff;box-shadow:0 20px 75px rgba(0,0,0,.14)}
`,`<div class="card"><div class="top"><div class="chip"><div class="ring"></div></div><div class="v">${icon('visa',67,22)}</div></div><div class="bot">${fit('CARD HOLDER',103,'n')}${fit('EXPIRES',60)}</div></div><div class="panel"></div>`);

define('task-app',`
:host{display:flex;flex:none;width:62px;height:50px;align-items:center;justify-content:center;position:relative}
:host([on])::after{content:"";position:absolute;bottom:0;left:5.5px;right:5.5px;height:3px;background:#76b9ed}
:host([stack])::after{background:linear-gradient(90deg,#76b9ed 41px,#5c92bd 41px)}
:host([current]){background:#49575d}:host([current])::after{left:0;right:0}
:host([alert]){background:#a4632c}:host([alert])::after{left:0;right:0;background:#ff7a0f}
.b{position:absolute;display:grid;place-items:center;border-radius:50%;color:#fff;font-size:14px;line-height:1}
`,el=>{const g=k=>el.getAttribute(k);return icon(g('icon'),g('w'),g('h'))+(g('badge')?`<div class="b" style="${g('bs')}">${g('badge')}</div>`:'');});
const APPS=[['chrome',29,29,'on current'],['trello',30,30],['edge',30,30,'on'],['explorer',28,28,'on'],['messenger',30,30],['store',30,30],['office',23,28],['mail',30,28,'on badge="1" bs="left:36px;top:25px;width:20px;height:20px;background:#263238;border:1px solid #9aa0a3;font-size:16px"'],['slack',28,28,'on badge="2" bs="left:31px;top:24px;width:16px;height:16px;background:#e01e5a;box-shadow:0 0 0 1px #7b1034"'],['zoom',28,28],['ppt',30,30,'on stack'],['word',30,28,'on stack'],['bee',30,22],['discord',24,28,'on alert badge="1" bs="left:29px;top:24px;width:17px;height:17px;background:#f04747;font-weight:700;font-size:13px"'],['vscode',30,30,'on']];
define('task-bar',`
:host{display:flex;flex:none;height:50px;background:linear-gradient(90deg,#17272d,#1c2e34 55%,#1a262c 85%,#1b2226);color:#fff;align-items:center}
.st{width:60px;display:grid;place-items:center}
.q{width:430px;height:50px;background:#f1f1f1;border:1px solid #bcbebf;display:flex;align-items:center;padding-left:14px;font-size:18px;color:#222}
.q fit-text{margin-left:15px;line-height:24px}
.c{width:61px;display:grid;place-items:center}.c2{width:62px}
.tray{display:flex;align-items:center;margin-left:31px}
.clock{font-size:14.2px;line-height:23px;display:flex;flex-direction:column;align-items:center;width:78px;margin-left:15.5px}
.n{position:relative;margin-left:22px}
.b{position:absolute;left:7px;top:9px;width:24px;height:24px;border-radius:50%;border:1px solid #8d9396;background:#2b3438;display:grid;place-items:center;font-size:14px;line-height:1;font-weight:600}
.end{width:1px;height:50px;background:#6a7377;margin:0 5px 0 auto}
`,`<div class="st">${icon('start',20)}</div><div class="q">${icon('search',20)}${fit('Type here to search',164)}</div><div class="c">${icon('cortana',20)}</div><div class="c c2">${icon('tview',20)}</div>`+
APPS.map(([i,w,h,a])=>`<task-app icon="${i}" w="${w}" h="${h}" ${a||''}></task-app>`).join('')+
`<div class="tray">${icon('chev',16,12)}<div style="margin-left:13px">${icon('battery',20,13)}</div><div style="margin-left:12px">${icon('wifi',16,16)}</div><div style="margin-left:11px">${icon('volume',20,18)}</div><div style="margin-left:10px">${icon('cloud',20,15)}</div><div style="margin-left:14px;font-size:14px">${fit('ENG',28)}</div></div>
<div class="clock">${fit('11:31 PM',60)}${fit('02/12/2020',77)}</div><div class="n">${icon('note',20)}<div class="b">23</div></div><div class="end"></div>`);
</script>
</body>
</html>
